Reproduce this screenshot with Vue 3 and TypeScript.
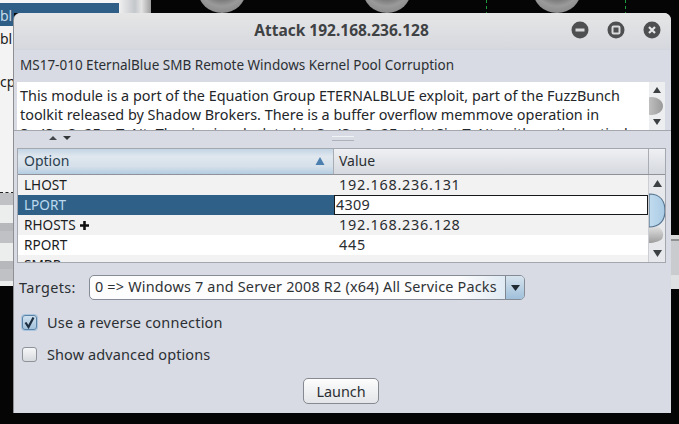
<script setup lang="ts">
interface Row { name: string; value: string; plus?: boolean; cls: string }
const rows: Row[] = [
  { name: 'LHOST', value: '192.168.236.131', cls: 'odd' },
  { name: 'LPORT', value: '4309', cls: 'sel' },
  { name: 'RHOSTS', value: '192.168.236.128', plus: true, cls: 'odd' },
  { name: 'RPORT', value: '445', cls: 'even' },
  { name: 'SMBPass', value: '', cls: 'odd' },
]
const discs = [222, 387, 557]
const dashes = [486, 625]
</script>

<template>
  <div class="desktop">
    <div class="bg-left">
      <div class="bg-white-top"></div>
      <div class="bg-blue"></div>
      <div class="bg-blue-end"><span>bl</span></div>
      <div class="bg-list">
        <span class="t1">bl</span>
        <span class="t2">cp</span>
      </div>
      <div class="bg-grey"></div>
    </div>
    <div class="bg-strip"></div>
    <div v-for="d in discs" :key="d" class="disc" :style="{ left: d - 24 + 'px' }"></div>
    <div v-for="d in dashes" :key="d" class="dash" :style="{ left: d + 'px' }"></div>
    <div class="bg-right"></div>

    <section class="win">
      <header class="title">
        <span class="title-text">Attack 192.168.236.128</span>
        <div class="wbtns">
          <svg width="18" height="18" viewBox="0 0 18 18"><circle cx="9" cy="9" r="8.500" fill="#4d4f50"/><rect x="4.500" y="7.500" width="9" height="3" fill="#d8dadc"/></svg>
          <svg width="18" height="18" viewBox="0 0 18 18"><circle cx="9" cy="9" r="8.500" fill="#4d4f50"/><rect x="5.500" y="5.500" width="7" height="7" rx="1" fill="none" stroke="#d8dadc" stroke-width="2"/></svg>
          <svg width="18" height="18" viewBox="0 0 18 18"><circle cx="9" cy="9" r="8.500" fill="#4d4f50"/><path d="M6 6l6 6M12 6l-6 6" stroke="#e4e6e8" stroke-width="2.200"/></svg>
        </div>
      </header>

      <div class="body">
        <div class="module">MS17-010 EternalBlue SMB Remote Windows Kernel Pool Corruption</div>

        <div class="desc">
          <div class="desc-text">This module is a port of the Equation Group ETERNALBLUE exploit, part of the FuzzBunch toolkit released by Shadow Brokers. There is a buffer overflow memmove operation in Srv!SrvOs2FeaToNt. The size is calculated in Srv!SrvOs2FeaListSizeToNt, with mathematical</div>
          <div class="sb sb-desc">
            <svg width="16" height="48" viewBox="0 0 16 48">
              <path d="M8 5l4 6H4z" fill="#3c4043"/>
              <ellipse cx="3" cy="24" rx="11" ry="9" fill="url(#g1)"/>
              <path d="M4 37h8l-4 6z" fill="#3c4043"/>
              <defs><linearGradient id="g1" x1="0" y1="0" x2="1" y2="0"><stop offset="0" stop-color="#d4d4d4"/><stop offset="1" stop-color="#9a9a9a"/></linearGradient></defs>
            </svg>
          </div>
        </div>

        <div class="split">
          <svg width="30" height="8" viewBox="0 0 30 8"><path d="M2 6l4-4 4 4z" fill="#44484c"/><path d="M16 2h8l-4 4z" fill="#33373a"/></svg>
          <span class="grip"></span>
        </div>

        <div class="table">
          <div class="thead">
            <div class="th th-opt"><span>Option</span>
              <svg width="10" height="8" viewBox="0 0 10 8"><path d="M5 0l4.500 8H.5z" fill="#4a7fb0"/></svg>
            </div>
            <div class="th th-val">Value</div>
            <div class="th th-end"></div>
          </div>
          <div class="tbody">
            <div class="rows">
              <div v-for="r in rows" :key="r.name" class="row" :class="r.cls">
                <div class="c-name">{{ r.name }}<svg v-if="r.plus" class="plus" width="9" height="9" viewBox="0 0 9 9"><path d="M3.200 0h2.600v3.200H9v2.600H5.800V9H3.200V5.800H0V3.200h3.200z" fill="#111"/></svg></div>
                <div class="c-val" :class="{ edit: r.cls === 'sel' }">{{ r.value }}</div>
              </div>
            </div>
            <div class="sb sb-table">
              <svg width="17" height="88" viewBox="0 0 17 88">
                <defs>
                  <linearGradient id="g2" x1="0" y1="0" x2="1" y2="0"><stop offset="0" stop-color="#c2dbee"/><stop offset="1" stop-color="#a9cbe5"/></linearGradient>
                  <linearGradient id="g3" x1="0" y1="0" x2="0" y2="1"><stop offset="0" stop-color="#e8e8e8"/><stop offset="1" stop-color="#9d9d9d"/></linearGradient>
                </defs>
                <path d="M8.500 5l4.500 7H4z" fill="#3c4043"/>
                <path d="M0 50h7c6 4 9 8 6 14-2 2-8 4-13 4z" fill="url(#g3)"/>
                <path d="M0 19c12 0 16 8 16 17S11 52 0 52z" fill="url(#g2)" stroke="#54738f" stroke-width="1.200"/>
                <path d="M4 75h9l-4.500 7z" fill="#3c4043"/>
              </svg>
            </div>
          </div>
        </div>

        <div class="targets">
          <span class="t-label">Targets:</span>
          <div class="combo">
            <span class="combo-text">0 =&gt; Windows 7 and Server 2008 R2 (x64) All Service Packs</span>
            <span class="combo-btn"><svg width="9" height="6" viewBox="0 0 9 6"><path d="M0 0h9L4.500 6z" fill="#1f2a33"/></svg></span>
          </div>
        </div>

        <label class="check first">
          <span class="box on"><svg width="13" height="13" viewBox="0 0 13 13"><path d="M2.500 6.500l3 4.500L10.500 1.500" fill="none" stroke="#1d2f40" stroke-width="2.200"/></svg></span>
          Use a reverse connection
        </label>
        <label class="check second"><span class="box"></span>Show advanced options</label>

        <div class="actions"><button class="launch" type="button">Launch</button></div>
      </div>
    </section>
  </div>
</template>

<style scoped>
.desktop { position: relative; width: 679px; height: 424px; background: #050505; overflow: hidden; font-family: "Noto Sans", sans-serif; color: #2b2f33; }
.bg-left { position: absolute; left: 0; top: 0; width: 14px; height: 285px; background: #f3f3f3; }
.bg-white-top { position: absolute; left: 0; top: 0; width: 119px; height: 3px; background: #f6f6f6; }
.bg-blue { position: absolute; left: 0; top: 3px; width: 119px; height: 10px; background: #2f5f86; }
.bg-blue-end { position: absolute; left: 0; top: 13px; width: 14px; height: 13px; background: #2f5f86; }
.bg-blue-end span { position: absolute; left: 0; top: -6px; color: #c7dceb; font-size: 14px; line-height: 18px; }
.bg-list { position: absolute; left: 0; top: 25px; width: 14px; height: 165px; }
.bg-list span { position: absolute; left: 0; color: #1a1a1a; font-size: 14px; line-height: 18px; }
.t1 { top: 5px; }
.t2 { top: 48px; }
.bg-grey { position: absolute; left: 0; top: 192px; width: 14px; height: 93px; background: repeating-linear-gradient(180deg, #bfc1c4 0 12px, #eceded 12px 30px, #b6b8bb 30px 38px); border-top: 1px dashed #222; }
.bg-strip { position: absolute; left: 119px; top: 0; width: 32px; height: 13px; background: linear-gradient(90deg, #f0f0f0, #c4c7cb 50%, #e3e3e3 70%, #9e9e9e); }
.disc { position: absolute; top: -32px; width: 48px; height: 45px; border-radius: 50%; background: radial-gradient(circle at 50% 30%, #6e6e6e 0 40%, #9a9a9a 62%, #7a7a7a 100%); }
.dash { position: absolute; top: 0; width: 1px; height: 13px; background: repeating-linear-gradient(180deg, #1f9a3c 0 3px, transparent 3px 6px); }
.bg-right { position: absolute; left: 671px; top: 235px; width: 8px; height: 54px; background: linear-gradient(180deg, #dadada 0 4px, #8f9092 4px 6px, #c9cbce 6px 40px, #dfe0e2 40px); }

.win { position: absolute; left: 14px; top: 13px; width: 657px; height: 400px; display: flex; flex-direction: column; background: #d8dbe3; border-radius: 7px 7px 0 0; overflow: hidden; box-shadow: -1px 0 0 #8d8f92; }
.title { flex: 0 0 36px; display: flex; align-items: center; justify-content: center; position: relative; background: linear-gradient(180deg, #e6e6e6, #d5d8de); border-bottom: 1px solid #d3d6de; }
.title-text { font-size: 15.500px; font-weight: 700; color: #3f4244; position: relative; top: -1px; left: -1px; }
.wbtns { position: absolute; right: 10px; top: 8px; display: flex; gap: 18px; }
.body { flex: 1; display: flex; flex-direction: column; min-height: 0; }
.module { height: 32px; padding-left: 6px; line-height: 31px; font-size: 13.500px; white-space: nowrap; }
.desc { margin-left: 3px; width: 648px; height: 48px; display: flex; background: #fff; overflow: hidden; }
.desc-text { flex: 1; padding: 4px 4px 0 3px; font-size: 14.400px; line-height: 19px; color: #23262a; height: 48px; box-sizing: border-box; overflow: hidden; }
.sb { flex: 0 0 auto; background: #eceef0; }
.sb-desc { width: 16px; height: 48px; }
.sb svg { display: block; }
.split { height: 15px; display: flex; align-items: center; padding-left: 33px; border-top: 1px solid #a4a7ad; position: relative; box-sizing: border-box; }
.grip { position: absolute; left: 318px; top: 5px; width: 22px; height: 3px; border-top: 1px solid #f2f3f5; border-bottom: 1px solid #aeb1b7; }
.table { margin: 3px 0 0 3px; width: 649px; height: 115px; border: 1px solid #a4a7ad; box-sizing: border-box; background: #fff; overflow: hidden; }
.thead { display: flex; height: 26px; border-bottom: 1px solid #8f9298; box-sizing: border-box; background: #d5d8de; }
.th { display: flex; align-items: center; font-size: 14px; line-height: 20px; padding: 0 0 2px 6px; box-sizing: border-box; background: linear-gradient(180deg, #eef0f3, #d5d8de); border-right: 1px solid #a9acb2; }
.th-opt { width: 316px; justify-content: space-between; padding-right: 8px; background: linear-gradient(180deg, #c3d5e6, #e0e7ee 30%, #d5e0ea 70%, #b4cde1); color: #2b3e50; }
.th-val { width: 315px; padding-left: 5px; }
.th-end { flex: 1; border-right: 0; }
.tbody { display: flex; height: 87px; overflow: hidden; }
.rows { width: 631px; }
.row { display: flex; height: 20px; font-size: 13.600px; line-height: 20px; color: #1b1d1f; }
.row.odd { background: #f2f2f2; }
.row.even { background: #fff; }
.row.sel { background: #2f6188; color: #bcd9ee; }
.c-name { width: 316px; padding-left: 6px; box-sizing: border-box; display: flex; align-items: center; gap: 4px; }
.c-val { flex: 1; padding-left: 5px; color: #2a2d30; font-size: 14.400px; letter-spacing: 0.750px; }
.c-val.edit { padding-left: 1px; background: #fff; border: 1px solid #16191c; box-sizing: border-box; line-height: 18px; letter-spacing: 0.300px; }
.sb-table { width: 16px; height: 87px; background: #e6e8ec; border-left: 1px solid #ccced3; }
.targets { margin-top: 12px; padding-left: 5px; display: flex; align-items: center; height: 25px; font-size: 14.400px; }
.t-label { width: 70px; letter-spacing: 0.400px; }
.combo { width: 436px; height: 25px; box-sizing: border-box; border: 1px solid #858c95; border-radius: 5px; display: flex; background: linear-gradient(90deg, #fdfdfd 85%, #d3e2ee); overflow: hidden; }
.combo-text { flex: 1; padding-left: 5px; line-height: 22px; white-space: nowrap; color: #2f3235; letter-spacing: 0.200px; }
.combo-btn { width: 18px; display: flex; align-items: center; justify-content: center; border-left: 1px solid #7f8890; background: linear-gradient(180deg, #d7e3ed, #9fc0da); }
.check { display: flex; align-items: center; gap: 10px; padding-left: 8px; font-size: 14.500px; letter-spacing: 0.200px; height: 20px; }
.check.first { margin-top: 12px; }
.check.second { margin-top: 12px; letter-spacing: 0.100px; }
.box { width: 15px; height: 15px; box-sizing: border-box; border: 1px solid #8e939a; border-radius: 3px; background: linear-gradient(180deg, #f6f7f8, #d7dade); display: flex; align-items: center; justify-content: center; }
.box.on { border-color: #5b83a8; background: linear-gradient(180deg, #cfe0ee, #a3c3dc); box-shadow: 0 0 0 1px #a9c5dd; }
.actions { display: flex; justify-content: flex-start; padding-left: 289px; margin-top: 14px; }
.launch { width: 76px; height: 26px; box-sizing: border-box; border: 1px solid #868a90; border-radius: 5px; background: linear-gradient(180deg, #fdfdfd, #e3e5e8); font-family: "Noto Sans", sans-serif; font-size: 14.400px; color: #2b2f33; padding: 0; }
</style>
